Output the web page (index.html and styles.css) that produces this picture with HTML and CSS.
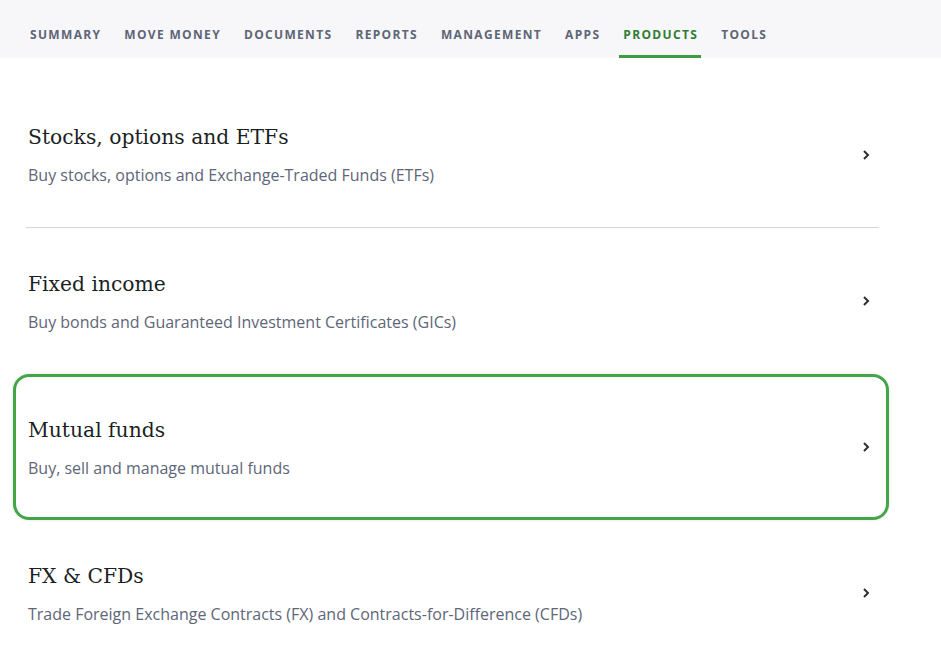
FILE: index.html
```html
<!DOCTYPE html>
<html lang="en">
<head>
<meta charset="utf-8">
<title>Products</title>
<link rel="stylesheet" href="styles.css">
</head>
<body>
<nav class="topnav">
  <a class="nav-item">SUMMARY</a>
  <a class="nav-item">MOVE MONEY</a>
  <a class="nav-item">DOCUMENTS</a>
  <a class="nav-item">REPORTS</a>
  <a class="nav-item">MANAGEMENT</a>
  <a class="nav-item">APPS</a>
  <a class="nav-item active">PRODUCTS</a>
  <a class="nav-item">TOOLS</a>
</nav>
<main class="list">
  <div class="item sep">
    <div class="text">
      <h2 class="title">Stocks, options and ETFs</h2>
      <p class="desc">Buy stocks, options and Exchange-Traded Funds (ETFs)</p>
    </div>
    <svg class="chev" width="10" height="12" viewBox="0 0 10 12"><path d="M3 2 L7 6 L3 10" fill="none" stroke="#2b2f36" stroke-width="2"/></svg>
  </div>
  <div class="item">
    <div class="text">
      <h2 class="title">Fixed income</h2>
      <p class="desc">Buy bonds and Guaranteed Investment Certificates (GICs)</p>
    </div>
    <svg class="chev" width="10" height="12" viewBox="0 0 10 12"><path d="M3 2 L7 6 L3 10" fill="none" stroke="#2b2f36" stroke-width="2"/></svg>
  </div>
  <div class="item focused">
    <div class="text">
      <h2 class="title">Mutual funds</h2>
      <p class="desc">Buy, sell and manage mutual funds</p>
    </div>
    <svg class="chev" width="10" height="12" viewBox="0 0 10 12"><path d="M3 2 L7 6 L3 10" fill="none" stroke="#2b2f36" stroke-width="2"/></svg>
  </div>
  <div class="item">
    <div class="text">
      <h2 class="title">FX &amp; CFDs</h2>
      <p class="desc">Trade Foreign Exchange Contracts (FX) and Contracts-for-Difference (CFDs)</p>
    </div>
    <svg class="chev" width="10" height="12" viewBox="0 0 10 12"><path d="M3 2 L7 6 L3 10" fill="none" stroke="#2b2f36" stroke-width="2"/></svg>
  </div>
</main>
</body>
</html>
```

FILE: styles.css
```css
* { box-sizing: border-box; }
html, body { margin: 0; padding: 0; background: #fff; }
body { font-family: "Open Sans", "Liberation Sans", sans-serif; overflow: hidden; }

.topnav {
  display: flex;
  gap: 24px;
  height: 58px;
  padding-left: 30px;
  background: #f7f7f9;
  align-items: stretch;
}
.nav-item {
  display: flex;
  align-items: center;
  font-size: 12px;
  font-weight: 700;
  letter-spacing: 1.33px;
  color: #5d6577;
  padding-top: 14px;
  border-bottom: 3px solid transparent;
  margin: 0 -4px;
  padding-left: 4px;
  padding-right: 3px;
}
.nav-item.active {
  color: #2f7d32;
  border-bottom-color: #3f9b42;
}

.list {
  margin-top: 24px;
  margin-left: 26px;
  width: 853px;
}
.item {
  position: relative;
  height: 146px;
  display: flex;
  align-items: center;
  justify-content: space-between;
  padding: 0 8px 0 2px;
}
.item.sep { border-bottom: 1px solid #d3d8e0; }
.item.focused::before {
  content: "";
  position: absolute;
  left: -13px;
  right: -10px;
  top: 0;
  bottom: 0;
  border: 3px solid #43a547;
  border-radius: 16px;
  box-shadow: 0 0 3px rgba(0,0,0,0.15);
}
.text { display: flex; flex-direction: column; }
.title {
  margin: 0;
  font-family: "DejaVu Serif", "Liberation Serif", serif;
  font-weight: 400;
  font-size: 20.3px;
  line-height: 28px;
  color: #1b1f24;
}
.desc {
  margin: 13px 0 0;
  font-size: 16px;
  line-height: 22px;
  color: #5e6678;
}
.chev { display: block; }
```
